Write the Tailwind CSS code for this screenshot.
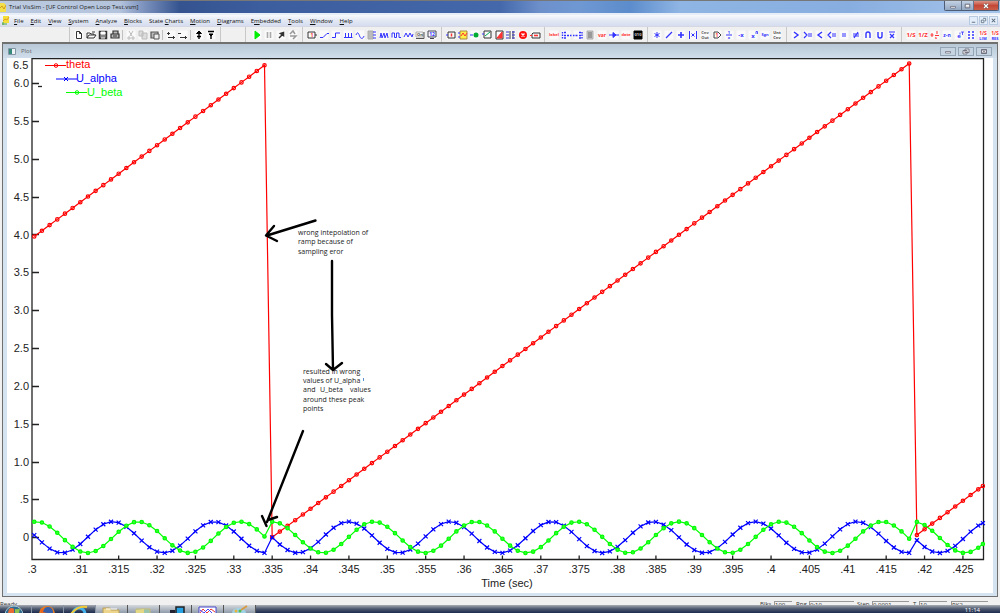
<!DOCTYPE html>
<html lang="en">
<head>
<meta charset="utf-8">
<title>Trial VisSim - [UF Control Open Loop Test.vsm]</title>
<script src="https://cdn.jsdelivr.net/npm/@tailwindcss/browser@4"></script>
</head>
<body class="flex h-screen flex-col overflow-hidden bg-[#f0f0f0] font-['Open_Sans','Noto_Sans',sans-serif] text-[6px] leading-none text-[#222]">

<header class="flex h-[15px] shrink-0 items-start border-t border-[#777]">
  <div class="flex h-full w-full items-center border-b-2 border-[#e8eef8] bg-[linear-gradient(90deg,#bccbe0_0%,#b3c3dc_12%,#8499c2_14%,#34538f_18%,#3c5d9e_26%,#4468aa_50%,#6d90cb_54%,#6f98d2_58%,#5c8ccc_63%,#8fb5e4_68%,#88aee0_85%,#a5c4ea_100%)]">
    <svg class="mr-[3px] h-[9px] w-[6px]" viewBox="0 0 6 9"><path d="M0 0h4l2 2v7H0z" fill="#f2df4a"/><path d="M0 5l2-2 2 3 2-4" stroke="#d39a20" fill="none"/></svg>
    <h1 class="whitespace-nowrap">Trial VisSim - [UF Control Open Loop Test.vsm]</h1>
    <div class="mr-px ml-auto flex h-[10px] self-start overflow-hidden rounded-b-[2px] border border-t-0 border-[#4e5d75]">
      <button aria-label="Minimize" class="flex w-[17px] items-center justify-center border-r border-[#66768e] bg-linear-to-b from-[#c4d2e4] to-[#93a8c2]"><svg class="h-2 w-3" viewBox="0 0 12 8"><path d="M3.500 4.500h5v1.500h-5z" fill="#fff" stroke="#556" stroke-width=".6"/></svg></button>
      <button aria-label="Restore" class="flex w-[12px] items-center justify-center border-r border-[#66768e] bg-linear-to-b from-[#c4d2e4] to-[#93a8c2]"><svg class="h-2 w-3" viewBox="0 0 12 8"><path d="M3.500 2h5v4h-5z" fill="#ddd" stroke="#556" stroke-width=".8"/><path d="M4.500 3.500h3" stroke="#fff"/></svg></button>
      <button aria-label="Close" class="flex w-[24px] items-center justify-center bg-linear-to-b from-[#d99488] via-[#c44736] to-[#c95d48]"><svg class="h-2 w-3" viewBox="0 0 12 8"><path d="M4 2l4 4M8 2l-4 4" stroke="#544" stroke-width="2.400"/><path d="M4 2l4 4M8 2l-4 4" stroke="#fff" stroke-width="1.400"/></svg></button>
    </div>
  </div>
</header>

<nav class="flex h-3 shrink-0 items-center border-b border-[#d5d8e2] bg-linear-to-b from-[#f8fafd] via-[#e3e8f3] to-[#d5ddef]">
  <svg class="mr-1 ml-[2px] h-[9px] w-[8px]" viewBox="0 0 8 9"><path d="M1 0h6v7H1z" fill="#f4df38"/><path d="M1 5l2-2 2 1 2-3" stroke="#e09a28" fill="none"/><path d="M0 8h5M1 6v3" stroke="#52a640"/></svg>
  <div id="menu" class="flex gap-[7px] whitespace-nowrap text-[#111]"></div>
  <div class="mr-[2px] ml-auto flex gap-px">
    <button aria-label="Minimize document" class="h-[9px] w-[9px] border border-[#b9cbe0] bg-[#e4eefa]"><svg viewBox="0 0 8 8"><path d="M2 6h4" stroke="#567"/></svg></button>
    <button aria-label="Restore document" class="h-[9px] w-[9px] border border-[#b9cbe0] bg-[#e4eefa]"><svg viewBox="0 0 8 8"><path d="M3.500 1.500h3v3h-1M1.500 3.500h3v3h-3z" stroke="#678" fill="none"/></svg></button>
    <button aria-label="Close document" class="h-[9px] w-[9px] border border-[#b9cbe0] bg-[#e4eefa]"><svg viewBox="0 0 8 8"><path d="M2 2l4 4M6 2L2 6" stroke="#567" stroke-width="1.200"/></svg></button>
  </div>
</nav>

<div id="toolbar" role="toolbar" aria-label="Tools" class="flex h-[15px] shrink-0 items-center overflow-hidden bg-[#f0f0f0] pl-[66px]"></div>

<main class="mr-[2px] ml-[2px] flex min-h-0 flex-1 flex-col border border-t-2 border-[#707070] bg-[#d5e2f0]">
  <div class="flex h-[14px] shrink-0 items-center bg-linear-to-b from-[#b8c8d6] to-[#d0deeb] pr-[5px] pl-[5px] text-[#666]">
    <svg class="mr-[5px] h-[7px] w-[8px]" viewBox="0 0 8 7"><path d="M.5.5h7v6h-7z" fill="#eef4f6" stroke="#8296a5"/><path d="M1 1h3v5H1z" fill="#368a7c"/></svg>
    <h2>Plot</h2>
    <div class="ml-auto flex gap-[2px]">
      <button aria-label="Minimize plot" class="h-[9px] w-4 border border-[#94a5b5] bg-[#c6d4e1]"><svg class="mx-auto h-[7px]" viewBox="0 0 12 7"><path d="M3.500 3.500h5v1.500h-5z" fill="#fff" stroke="#667" stroke-width=".7"/></svg></button>
      <button aria-label="Restore plot" class="h-[9px] w-4 border border-[#94a5b5] bg-[#c6d4e1]"><svg class="mx-auto h-[7px]" viewBox="0 0 12 7"><path d="M5 1h4v3.500H5zM3 2.500h4V6H3z" fill="#eee" stroke="#667" stroke-width=".8"/></svg></button>
      <button aria-label="Close plot" class="h-[9px] w-4 border border-[#94a5b5] bg-[#c6d4e1]"><svg class="mx-auto h-[7px]" viewBox="0 0 12 7"><path d="M3.500 1.500h5v4h-5zM4 1.500l4 4M8 1.500l-4 4" fill="#eee" stroke="#667" stroke-width=".9"/></svg></button>
    </div>
  </div>
  <div class="mx-1 mb-[3px] min-h-0 flex-1 bg-white">
    <svg id="plot" class="block h-full w-full font-['Liberation_Sans',Arial,sans-serif]" viewBox="7 58 986 535" role="img" aria-label="theta, U_alpha and U_beta against time">
      <g id="axes" fill="none" stroke="#222" stroke-width="1.300"><path d="M32 559.500V58.500H983.500V559.500Z"/><path d="M38 86.500h4"/></g>
      <g id="labels" font-size="11" fill="#222"></g>
      <g id="series" fill="none" stroke-width="1.200"></g>
      <g font-size="11">
        <g stroke="#f00" fill="none"><path d="M45 65.500H66"/><circle cx="56" cy="65.500" r="1.800"/></g><text x="66" y="68" fill="#f00">theta</text>
        <g stroke="#00f" fill="none"><path d="M56 79H77M64 77l4 4M68 77l-4 4"/></g><text x="76" y="82" fill="#00f">U_alpha</text>
        <g stroke="#0f0" fill="none"><path d="M66 92.500H87"/><circle cx="77" cy="92.500" r="1.800"/></g><text x="87" y="96" fill="#0f0">U_beta</text>
      </g>
      <g class="font-['Open_Sans','Noto_Sans',sans-serif]" font-size="7" fill="#222">
        <text x="298" y="235">wrong intepolation of</text>
        <text x="298" y="244">ramp because of</text>
        <text x="298" y="254">sampling eror</text>
        <text x="303" y="374">resulted in wrong</text>
        <text x="303" y="383">values of</text><text x="334" y="383">U_alpha</text><path d="M363.500 378v3" stroke="#5b8ed0"/>
        <text x="303" y="392">and</text><text x="320" y="392">U_beta</text><text x="350" y="392">values</text>
        <text x="303" y="402">around these peak</text>
        <text x="303" y="411">points</text>
      </g>
      <g fill="none" stroke="#000" stroke-width="2.400" stroke-linecap="round" stroke-linejoin="round">
        <path d="M315.500 220.500L267 235.500M274 226L266 235.500L277 241"/>
        <path d="M332 261V315L333 370M326 364L333 370L342 363"/>
        <path d="M303 431L267 522M262 516L266.500 526M277 517L268 520"/>
      </g>
    </svg>
  </div>
</main>

<footer class="shrink-0">
  <div class="mt-[3px] flex h-[5px] items-start overflow-hidden text-[#333]">
    <span class="mt-px">Ready</span>
    <dl class="mt-px mr-3 ml-auto flex">
      <dt class="w-[14px]">Blks</dt><dd class="mr-1 w-[18px] border-t border-l border-[#999]">100</dd>
      <dt class="w-[13px]">Rng</dt><dd class="mr-[3px] w-[45px] border-t border-l border-[#999]">0:10</dd>
      <dt class="w-[15px]">Step</dt><dd class="mr-1 w-[37px] border-t border-l border-[#999]">0.0001</dd>
      <dt class="w-[6px]">T</dt><dd class="mr-1 w-[28px] border-t border-l border-[#999]">10</dd>
      <dd class="w-[37px] border-t border-l border-[#999]">RK2</dd>
    </dl>
  </div>
  <div class="flex h-2 items-start overflow-hidden bg-linear-to-b from-[#a9adb3] via-[#4b566d] to-[#1e2c4e]">
    <div id="tasks" class="flex"></div>
    <time class="mt-[2px] mr-5 ml-auto text-white">11:14</time>
  </div>
</footer>

<script>
const el = id => document.getElementById(id);

el('menu').innerHTML = ['_File','_Edit','_View','_System','_Analyze','_Blocks','State _Charts','_Motion','_Diagrams','E_mbedded','_Tools','_Window','_Help']
  .map(m => '<button class="whitespace-pre">' + m.replace(/_(.)/, '<u>$1</u>') + '</button>').join('');

// Toolbar icons on a 12 x 12 grid
const p = (d, c = '#33f', w = 1, f = 'none') => `<path d="${d}" stroke="${c}" stroke-width="${w}" fill="${f}"/>`;
const t = (s, c = '#33f', z = 6, y = 8) => `<text x="6" y="${y}" font-size="${z}" font-weight="bold" text-anchor="middle" fill="${c}">${s}</text>`;
const K = '#333', R = '#f33', G = '#aaa';
const groups = [
  ['sep7',
   ['New', p('M3.500 2.500h3l2 2v5h-5zM6.500 2.500v2h2', K)],
   ['Open', p('M2 9V4h3l1 1h3v1M2 9l2-3h7L9 9zM7 3h3', K)],
   ['Save', p('M2.500 2.500h7v7h-7z', K, 1.5, '#888') + p('M4 3h4v2H4z', '#fff', 1, '#fff') + p('M4 9h4', '#fff')],
   ['Print', p('M4 5V2h5v3M2 5h8v4H2z', K, 1.2, '#bbb') + p('M4 7h4', K)]],
  ['sep4',
   ['Cut', p('M4 2l3 5M8 2L5 7M3 8h2v2H3zM7 8h2v2H7z', '#bbb')],
   ['Copy', p('M2 2h4v5H2zM5 4h5v6H5z', '#bbb', 1, '#ddd')],
   ['Paste', p('M2 3h7v6H2z', '#555', 1.2, '#bbb') + p('M5 5h5v5H5z', '#555', 1, '#eee')]],
  ['sep4',
   ['Add connector', p('M2 4.500h3M3.500 3v3', K) + p('M3 8.500h7M8 7l1.500 1.500L8 10', K)],
   ['Remove connector', p('M1 4.500h3', K) + p('M3 8.500h7M8 7l1.500 1.500L8 10', K)]],
  ['sep4',
   ['Up', p('M6 2l2.500 2.500h-5z', '#000', 1, '#000') + p('M6 5v5M4 7.500h4', '#000', 1.4)],
   ['Down', p('M3 2.500h6M6 7v3', '#000', 1.4) + p('M4 5h4L6 7z', '#000', 1, '#000')]],
  ['sep7'],
  ['wide',
   ['Go', p('M4 2l5 4l-5 4z', '#0e0', 1, '#0e0')],
   ['Pause', p('M4.500 3v6M7.500 3v6', G, 1.6)],
   ['Step', p('M4 9l4-4M5.500 4.500l3-1v3z', K, 1.5)],
   ['Reset', p('M3 5l3-3l2 3M3 7h6L6 10', '#999', 1.5)]],
  ['sep7',
   ['Const', p('M2 3h7v6H2zM9 6h2', K) + t('1', R, 5)],
   ['Ramp', p('M2 8.500h3l4-4h2')],
   ['Step source', p('M2 8.500h3.500V4H10')],
   ['Pulse train', p('M2 8.500h8.500M3.500 9V4M6.500 9V4M9.500 9V4')],
   ['Sinusoid', p('M2 6c2-5 3 0 4 2s3 2 4-1')],
   ['Signal group', p('M2 2h5v8H2z', G, 1, '#bbb') + p('M7 3h3M7 6h3M7 9h3')],
   ['Noise', p('M2 9l1-5l1 5l2-5l1 5l2-5l1 5')],
   ['Square', p('M2 8.500V4h2.500v4.500h2V4H9v4.500h2')],
   ['Triangle', p('M2 8l2-4l2 4l2-4l2 4l1-3')],
   ['Button', p('M2 3h7v5H2z', '#aaa') + p('M2 9.500h8V3', '#555') + t('On', '#444', 4, 7)],
   ['Import', p('M2 2h8v6H2zM4 9.500h4', '#445') + t('12', '#33f', 5, 7)]],
  ['sep7',
   ['Display', p('M3 3h7v6H3z', K) + p('M1 6h2') + p('M6.500 4.500v3', R, 1.5)],
   ['Plot block', p('M3 2h7v8H3z', '#a84', 1, '#fe4') + p('M4 7l2-3l2 3l2-3', R) + p('M1 4h2M1 8h2')],
   ['Light', '<circle cx="7" cy="6" r="2.500" fill="#0a3"/>' + p('M1 6h3')],
   ['Stripchart', p('M3 2h7v7H3z', K) + p('M4 7l5-4', '#0a5') + p('M1 5h2')],
   ['Meter', p('M3 2h7v8H3z', K) + p('M4 9l5-6v6z', R, 1, R)],
   ['Histogram', p('M5 2v8M8 2v8', '#999', 2) + p('M1 3h3M1 6h3M1 9h3M7 3h3M7 6h3M7 9h3', '#33c', 1)],
   ['Stop', '<circle cx="6" cy="6" r="4" fill="#f11"/>' + p('M4.500 4.500l3 3M7.500 4.500l-3 3', '#fff', 1.4)],
   ['Error', p('M4 4h7v5H3V5z', K) + p('M5 6.500h4', R, 1.6) + p('M1 6.500h2', R)]],
  ['sep7',
   ['Label', t('label', R, 4, 7)],
   ['Bus in', p('M2.500 3v1.500M2.500 5.500V7M2.500 8v1.500M4 3.500h2M4 6.500h2M4 9h2M7 6.500h2M10 6.500h1.500', '#33f', 1.4)],
   ['Bus out', p('M1 6.500h1.500M3.500 6.500h2M7 3.500h2M7 6.500h2M7 9h2M10 3v1.500M10 5.500V7M10 8v1.500', '#33f', 1.4)],
   ['Comment', p('M3 2h6v8H3z', '#aaa', 1, '#ccc') + p('M4 4h4M4 6h4M4 8h4', '#666')],
   ['Variable', t('var', R, 5)],
   ['Wire', p('M1 6h10M5 3.500v5l3-2.500z', '#33f', 1, '#33f')],
   ['Date', t('date', R, 4, 7)],
   ['Bezel', p('M2 2h8v8H2z', '#000', 1, '#000') + t('010', '#ccc', 4, 7)]],
  ['sep7',
   ['Multiply', p('M6 3v6M3.500 4.500l5 3M8.500 4.500l-5 3', '#33f', 1)],
   ['Divide', p('M3 9l6-6', '#33f', 1.2)],
   ['Sum', p('M6 3v6M3 6h6', '#33f', 1.6)],
   ['Absolute', p('M2.500 2v8M9.500 2v8M4.500 4.500l3 3M7.500 4.500l-3 3')],
   ['Limit', t('Cnv', '#555', 4, 5) + t('Out', '#555', 4, 10)],
   ['Gain', p('M3 3h4l3 3l-3 3H3z', '#444') + t('1', R, 5)],
   ['Inverse', t('1', '#33f', 4, 5) + p('M3 6h6') + t('x', '#33f', 4, 10)],
   ['Negate', t('-x')],
   ['Power', t('x', '#33f', 6, 9) + p('M9 5V2.500h1.500V5', '#33f', .8)],
   ['Sign', t('Sgn', '#33f', 4, 7)],
   ['Unit conversion', t('Unt', '#444', 4, 5) + t('Cnv', '#444', 4, 10)]],
  ['sep7',
   ['Greater', p('M4 3l4 3l-4 3', '#33f', 1.4)],
   ['Greater or equal', p('M2 3l3 3l-3 3M6 5h4M6 7h4', '#33f', 1.2)],
   ['Less', p('M8 3L4 6l4 3', '#33f', 1.4)],
   ['Less or equal', p('M5 3L2 6l3 3M6 5h4M6 7h4', '#33f', 1.2)],
   ['Equal', p('M4 5h4M4 7h4', '#33f', 1.2)],
   ['Not equal', p('M3 5h6M3 7h6M8 3L4 9', '#33f', 1.2)],
   ['And', p('M4 9V5q0-2 2-2t2 2v4', '#33f', 1.4)],
   ['Or', p('M4 3v4q0 2 2 2t2-2V3', '#33f', 1.4)],
   ['Not', p('M3 3h6M4 5l4 4M8 5l-4 4', '#33f', 1.2)]],
  ['sep7',
   ['Integrator', t('1/S', R)],
   ['Unit delay', t('1/Z', R)],
   ['Reset integrator', p('M3 4v4M1.500 6h3M6 6.500h4M8 2v3', R) + t('&#160;&#160;s', R, 4, 10)],
   ['Time delay', t('z-n', '#33f', 5)],
   ['Exponential', t('e', '#33f', 6, 9) + p('M8 3h3M9.500 3v3M7 3.500v2', '#33f', .8)],
   ['State space', p('M3 3h2M7 3h2M3 6h2M7 6h2M3 9h2M7 9h2', '#33f', 1.4)],
   ['Limited integrator', t('1/S', R, 5, 6) + t('LIM', '#33f', 4, 11)],
   ['Reset limited integrator', t('1/S', R, 5, 6) + t('RES', '#33f', 4, 11)]]
];
const seps = {
  sep7: '<i class="mx-[3px] h-[15px] w-px shrink-0 bg-[#c8c8c8]"></i>',
  sep4: '<i class="mr-[2px] ml-px h-[10px] w-px shrink-0 bg-[#c0c0c0]"></i>',
  wide: ''
};
el('toolbar').innerHTML = groups.map(([sep, ...items], i) =>
  (i === 4 ? '<i class="mr-6 ml-[3px] h-[15px] w-px shrink-0 bg-[#c8c8c8]"></i><i class="mr-[5px] h-[15px] w-px shrink-0 bg-[#c8c8c8]"></i>' : seps[sep]) +
  items.map(([n, s]) => `<button aria-label="${n}" class="h-3 w-3 shrink-0"><svg class="block h-3 w-3" viewBox="0 0 12 12"><path d="M1.500 1.500h9v9h-9z" fill="#fafafa"/>${s}</svg></button>`).join('')).join('');

// Chart: time in ms and value mapped to plot units
const X = n => Math.min(983, 80.3 + 7.675 * (n - 310));
const Y = v => 537.3 - 75.7 * v;
let labels = '<text x="13" y="69">6.5</text>', ticks = '';
for (let i = 0; i <= 12; i++) {
  const y = Y(i / 2), s = i ? (i / 2).toFixed(1).replace(/^0/, '') : '0';
  labels += `<text x="29" y="${y + 4}" text-anchor="end">${s}</text>`;
  ticks += `M32 ${Math.round(y) + .5}h7`;
}
labels += '<text x="32" y="573" text-anchor="middle">.3</text>';
for (let n = 310; n <= 425; n += 5) {
  labels += `<text x="${X(n)}" y="573" text-anchor="middle">${String(n / 1000).slice(1)}</text>`;
  ticks += `M${X(n)} 559.5v-4`;
}
labels += '<text x="507" y="587" text-anchor="middle">Time (sec)</text>';
el('labels').innerHTML = labels;
el('axes').innerHTML += `<path d="${ticks}"/>`;

const theta = [], alpha = [], beta = [];
for (let k = 304; k <= 428; k++) {
  const n = Math.min(k, 427.6);
  const [ref, zero] = n < 335 ? [304.3, 251.3] : n < 419 ? [335, 335] : [418.6, 418.6];
  const a = 2 * Math.PI * (n - ref) / 13.25;
  theta.push([X(n), Y((n - zero) * .0754)]);
  alpha.push([X(n), Y(-.207 * Math.sin(a))]);
  beta.push([X(n), Y(.207 * Math.cos(a))]);
}
const line = (pts, c, mark) => `<g stroke="${c}"><polyline points="${pts.map(q => q.join()).join(' ')}"/>${pts.map(mark).join('')}</g>`;
const ring = ([x, y]) => `<circle cx="${x}" cy="${y}" r="1.700"/>`;
const dot = ([x, y]) => `<circle cx="${x}" cy="${y}" r="1.700" fill="#3f3"/>`;
const cross = ([x, y]) => `<path d="M${x - 2} ${y - 2}l4 4m0-4l-4 4"/>`;
el('series').innerHTML = line(theta, '#f00', ring) + line(alpha, '#00f', cross) + line(beta, '#0f0', dot);

const apps = [
  ['Start', '<circle cx="14" cy="10" r="9" fill="#316b90" stroke="#a8c7d5"/><path d="M9 4q3-2 5 0v4H8z" fill="#e86b35"/><path d="M15 4q3 1 5-1l-1 5h-4z" fill="#8dc351"/>'],
  ['Firefox', '<circle cx="15" cy="9" r="8" fill="#e47b22"/><circle cx="16" cy="7" r="5" fill="#355fa8"/><path d="M8 5l4-2l-1 4l4 1l-4 3z" fill="#e8641d"/>'],
  ['Internet Explorer', '<circle cx="15" cy="9" r="6" fill="none" stroke="#43b3ed" stroke-width="3"/><path d="M7 9Q14 0 23 2" stroke="#f2ca35" stroke-width="2" fill="none"/>'],
  ['Explorer', '<path d="M7 3h7l1 2h8v6H7z" fill="#ecd58b" stroke="#b89c53"/><path d="M10 4h11" stroke="#fff"/>'],
  ['Folder', '<path d="M8 4h14v7H8z" fill="#9bc4ae" stroke="#c8bc72"/><path d="M8 5l8-1v7H8z" fill="#e4d884"/>'],
  ['Computer', '<path d="M16 2h8v7h-8z" fill="#27a2e5" stroke="#222" stroke-width="1.500"/><path d="M10 5h5v4h-5z" fill="#223"/>'],
  ['VisSim', '<path d="M7 2h17v9H7z" fill="#fff" stroke="#44c"/><path d="M8 8l3-4l4 4l4-4l4 3" fill="none" stroke="#e33"/><path d="M8 5l4 3l4-4l4 4" fill="none" stroke="#44f"/>'],
  ['Paint', '<ellipse cx="15" cy="8" rx="7" ry="5" fill="#9fd2e6"/><circle cx="12" cy="6" r="1.500" fill="#e8b33a"/><circle cx="16" cy="6" r="1.500" fill="#5b5"/><path d="M17 5l6-4" stroke="#d79b45" stroke-width="2"/>']
];
el('tasks').innerHTML = apps.map(([n, s], i) =>
  `<button aria-label="${n}" class="${i > 2 ? 'h-2 w-8 border-r border-[#555] bg-linear-to-b from-[#d5d8dc] to-[#909cab]' : 'h-2 w-8 border-r border-[#8893a3]'}"><svg class="block h-2 w-[31px]" viewBox="0 0 31 8">${s}</svg></button>`).join('');
</script>
</body>
</html>
